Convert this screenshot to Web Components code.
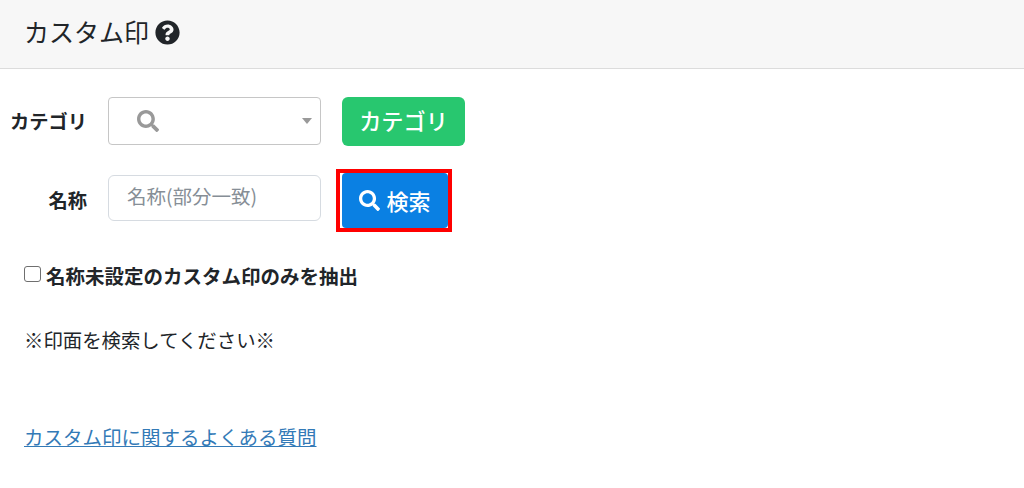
<!DOCTYPE html>
<html lang="ja"><head><meta charset="utf-8">
<style>
html,body{margin:0;padding:0;background:#fff}
body{font-family:"Noto Sans CJK JP","Noto Sans",sans-serif;color:#212529;width:1024px;height:488px;overflow:hidden}
</style></head><body>
<stamp-page></stamp-page>
<script>
const SEARCH='<svg viewBox="0 0 512 512" width="100%" height="100%" fill="currentColor"><path d="M505 442.700L405.300 343c-4.500-4.500-10.600-7-17-7H372c27.600-35.300 44-79.700 44-128C416 93.100 322.900 0 208 0S0 93.100 0 208s93.100 208 208 208c48.300 0 92.700-16.400 128-44v16.300c0 6.400 2.500 12.500 7 17l99.700 99.700c9.400 9.400 24.600 9.400 33.900 0l28.300-28.300c9.400-9.400 9.400-24.600.1-34zM208 336c-70.700 0-128-57.200-128-128 0-70.700 57.200-128 128-128 70.700 0 128 57.200 128 128 0 70.700-57.200 128-128 128z"/></svg>';
function def(name,html){customElements.define(name,class extends HTMLElement{constructor(){super();this.attachShadow({mode:'open'}).innerHTML=html}})}
def('page-header',`<style>:host{display:flex;align-items:center;gap:6px;height:68px;box-sizing:content-box;padding-left:24px;background:#f7f7f7;border-bottom:1px solid #dcdcdc;font-size:25px;line-height:1;color:#212529}
svg{width:25px;height:25px;display:block;margin-top:-4px}span{margin-top:-6px}</style>
<span><slot></slot></span><svg viewBox="0 0 512 512" fill="#212529"><path d="M504 256c0 137-111 248-248 248S8 393 8 256C8 119 119 8 256 8s248 111 248 248zM262.700 90c-54.500 0-89.300 23-116.500 63.800-3.500 5.300-2.400 12.400 2.700 16.300l34.700 26.300c5.200 3.900 12.600 3 16.700-2.100 17.900-22.700 30.100-35.800 57.300-35.800 20.400 0 45.700 13.100 45.700 33 0 15-12.400 22.700-32.700 34C247.100 238.500 216 254.900 216 296v4c0 6.600 5.400 12 12 12h56c6.600 0 12-5.400 12-12v-1.300c0-28.500 83.200-29.700 83.200-106.700 0-58-60.200-102-116.500-102zM256 338c-25.400 0-46 20.600-46 46 0 25.400 20.600 46 46 46s46-20.600 46-46c0-25.400-20.600-46-46-46z"/></svg>`);
def('form-row',`<style>:host{display:grid;grid-template-columns:87px 213px auto;column-gap:21px;align-items:center}
.l{justify-self:end;font-size:19.300px;font-weight:700;line-height:1;white-space:nowrap;color:#212529}</style>
<div class="l"><slot name="label"></slot></div><slot name="field"></slot><slot name="action"></slot>`);
def('select-box',`<style>:host{display:flex;align-items:center;box-sizing:border-box;width:213px;height:48px;margin-bottom:1px;border:1.500px solid #c6c6c6;border-radius:4px;background:#fff;padding-left:28px;padding-right:8.500px;justify-content:space-between}
.i{width:22px;height:22px;color:#999;display:block}.c{width:0;height:0;border-left:5px solid transparent;border-right:5px solid transparent;border-top:6px solid #999}</style>
<div class="i">${SEARCH}</div><div class="c"></div>`);
def('text-box',`<style>:host{display:flex;align-items:center;box-sizing:border-box;width:213px;height:46px;margin-bottom:6px;border:1.500px solid #d6dbe1;border-radius:6px;background:#fff;padding-left:18px;font-size:19.500px;line-height:1;color:#868e96;white-space:nowrap}
span{margin-top:-3px}</style><span><slot></slot></span>`);
def('green-button',`<style>:host{display:inline-flex;align-items:center;justify-content:center;box-sizing:border-box;width:123px;height:49px;padding-bottom:3px;background:#28c76f;border-radius:6px;color:#fff;font-size:22.200px;font-weight:500;line-height:1}</style><slot></slot>`);
def('search-button',`<style>:host{display:inline-block;justify-self:start;margin-left:-6px;border:4px solid #f00;padding:0 0 0 2px;line-height:0;background:#fff}
.b{display:flex;align-items:center;justify-content:center;gap:6px;box-sizing:border-box;width:106px;height:55px;padding-bottom:1px;background:#0a80e3;border-radius:4px;color:#fff;font-size:22px;font-weight:500;line-height:1}
.i{width:21px;height:21px;display:block}</style><div class="b"><div class="i">${SEARCH}</div><slot></slot></div>`);
def('stamp-page',`<style>:host{display:block}
.rows{display:flex;flex-direction:column;padding:28px 0 0 0}
.r2{margin-top:23px}
.chk{display:flex;align-items:center;gap:5px;margin:30px 0 0 24px;font-size:19.500px;font-weight:700;line-height:28px;color:#212529}
.box{box-sizing:border-box;width:17px;height:16px;border:1.500px solid #6f6f6f;border-radius:3px;background:#fff;margin-top:-5px}
.msg{margin:36px 0 0 24px;font-size:19.400px;line-height:28px;color:#212529}
a{display:block;width:max-content;margin:69px 0 0 24px;font-size:19.500px;line-height:28px;color:#337ab7;text-decoration:underline}
</style>
<page-header>カスタム印</page-header>
<div class="rows">
<form-row><span slot="label">カテゴリ</span><select-box slot="field"></select-box><green-button slot="action">カテゴリ</green-button></form-row>
<form-row class="r2"><span slot="label">名称</span><text-box slot="field">名称(部分一致)</text-box><search-button slot="action">検索</search-button></form-row>
</div>
<div class="chk"><div class="box"></div><span>名称未設定のカスタム印のみを抽出</span></div>
<div class="msg">※印面を検索してください※</div>
<a href="#">カスタム印に関するよくある質問</a>`);
</script>
</body></html>
